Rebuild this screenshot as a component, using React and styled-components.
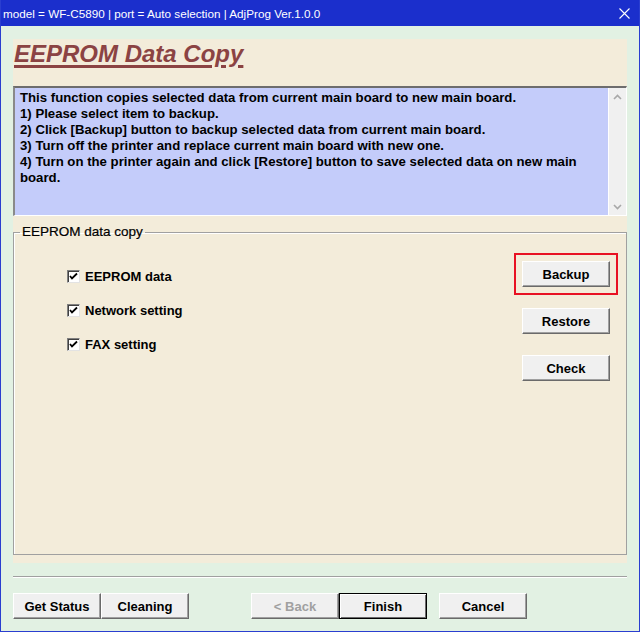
import styled, { createGlobalStyle } from "styled-components";

const GlobalStyle = createGlobalStyle`
    body {
        margin: 0;
        font-family: "Liberation Sans", Arial, sans-serif;
    }
`

const Window = styled.div`
    width: 640px;
    height: 632px;
    box-sizing: border-box;
    display: flex;
    flex-direction: column;
    background-color: #e2f1e3;
    border: 1px solid #2a3ed0;
    border-top: none;
    overflow: hidden;
`

const TitleBar = styled.div`
    height: 26px;
    flex: none;
    display: flex;
    align-items: center;
    justify-content: space-between;
    padding: 0 10px 0 3px;
    margin: 0 -1px;
    background-color: #1b2fcc;
    color: #fff;
    font-size: 11.7px;
    font-family: "Liberation Sans", Arial, sans-serif;
    >svg {
        display: block;
    }
`

const Body = styled.div`
    flex: 1;
    display: flex;
    flex-direction: column;
    padding: 13px 12px 0 12px;
`

const Panel = styled.div`
    height: 524px;
    display: flex;
    flex-direction: column;
    background-color: #f3ecda;
`

const Heading = styled.h1`
    margin: 0;
    padding: 1px 0 0 1px;
    height: 47px;
    box-sizing: border-box;
    font-size: 24px;
    line-height: 28px;
    font-weight: bold;
    font-style: italic;
    color: #8b4343;
    text-decoration: underline;
    text-decoration-thickness: 3px;
    text-underline-offset: 3px;
`

const TextBox = styled.div`
    height: 130px;
    box-sizing: border-box;
    display: flex;
    background-color: #c4ccfa;
    border-style: solid;
    border-width: 2px 1px 1px 2px;
    border-color: #6d6d6d #ffffff #ffffff #8a8a8a;
    >div.text {
        flex: 1;
        padding: 2px 5px;
        font-size: 13.2px;
        font-weight: bold;
        line-height: 16px;
        color: #000;
    }
`

const ScrollBar = styled.div`
    width: 17px;
    flex: none;
    display: flex;
    flex-direction: column;
    justify-content: space-between;
    align-items: center;
    padding: 6px 0 5px;
    background-color: #f0f0f0;
    border-left: 1px solid #fff;
`

const Group = styled.fieldset`
    margin: 8px 0 0 0;
    padding: 0 16px 0 6px;
    height: 331px;
    box-sizing: border-box;
    border: 1px solid #a0a0a0;
    box-shadow: inset 1px 1px 0 #fff;
    display: flex;
    justify-content: space-between;
    align-items: flex-start;
    >legend {
        padding: 0 2px;
        font-size: 13.5px;
        line-height: 16px;
        color: #000;
        -webkit-text-stroke: 0.2px #000;
    }
`

const CheckList = styled.div`
    margin: 26px 0 0 47px;
    display: flex;
    flex-direction: column;
    gap: 14px;
`

const CheckRow = styled.label`
    display: flex;
    align-items: center;
    gap: 5px;
    height: 20px;
    font-size: 13px;
    font-weight: bold;
    color: #000;
`

const Box = styled.span`
    width: 13px;
    height: 13px;
    box-sizing: border-box;
    display: flex;
    align-items: center;
    justify-content: center;
    background-color: #fff;
    border-style: solid;
    border-width: 1px;
    border-color: #808080 #e3e3e3 #e3e3e3 #808080;
    box-shadow: inset 1px 1px 0 #404040;
`

const ButtonColumn = styled.div`
    margin-top: 21px;
    display: flex;
    flex-direction: column;
    gap: 21px;
`

const Button = styled.button`
    width: 88px;
    height: 26px;
    box-sizing: border-box;
    padding: 0;
    background-color: #f0f0f0;
    font-family: "Liberation Sans", Arial, sans-serif;
    font-size: 13px;
    font-weight: bold;
    color: ${p => p.disabled ? "#a0a0a0" : "#000"};
    border: 1px solid;
    border-color: ${p => p.$default ? "#000" : "#fff #6a6a6a #6a6a6a #fff"};
    box-shadow: ${p => p.$default
        ? "inset 1px 1px 0 #fff, inset -1px -1px 0 #6a6a6a"
        : "inset -1px -1px 0 #a0a0a0"};
    outline: ${p => p.$focus ? "2px solid #e81123" : "none"};
    outline-offset: 6px;
`

const Separator = styled.div`
    margin-top: 13px;
    height: 1px;
    background-color: #a0a0a0;
    border-bottom: 1px solid #fff;
`

const Footer = styled.div`
    margin-top: 15px;
    display: flex;
    align-items: center;
    >div {
        display: flex;
    }
    >div.nav {
        margin-left: 62px;
    }
    >.cancel {
        margin-left: 12px;
    }
`

function Check() {
    return (
        <svg width="9" height="9" viewBox="0 0 9 9">
            <path d="M1 4 L3 6.5 L8 1.5" stroke="#000" strokeWidth="1.8" fill="none" />
        </svg>
    )
}

function Chevron({ up }) {
    return (
        <svg width="9" height="6" viewBox="0 0 9 6">
            <path d={up ? "M1 5 L4.5 1.5 L8 5" : "M1 1 L4.5 4.5 L8 1"} stroke="#a8a8a8" strokeWidth="1.6" fill="none" />
        </svg>
    )
}

const items = ["EEPROM data", "Network setting", "FAX setting"];

export default function App() {
    return (
        <>
            <GlobalStyle />
            <Window>
                <TitleBar>
                    <span>model = WF-C5890 | port = Auto selection | AdjProg Ver.1.0.0</span>
                    <svg width="11" height="11" viewBox="0 0 11 11">
                        <path d="M0.5 0.5 L10.5 10.5 M10.5 0.5 L0.5 10.5" stroke="#fff" strokeWidth="1.1" />
                    </svg>
                </TitleBar>
                <Body>
                    <Panel>
                        <Heading>EEPROM Data Copy</Heading>
                        <TextBox>
                            <div className="text">
                                This function copies selected data from current main board to new main board.<br />
                                1) Please select item to backup.<br />
                                2) Click [Backup] button to backup selected data from current main board.<br />
                                3) Turn off the printer and replace current main board with new one.<br />
                                4) Turn on the printer again and click [Restore] button to save selected data on new main board.
                            </div>
                            <ScrollBar>
                                <Chevron up />
                                <Chevron />
                            </ScrollBar>
                        </TextBox>
                        <Group>
                            <legend>EEPROM data copy</legend>
                            <CheckList>
                                {items.map(item => (
                                    <CheckRow key={item}>
                                        <Box><Check /></Box>
                                        {item}
                                    </CheckRow>
                                ))}
                            </CheckList>
                            <ButtonColumn>
                                <Button $focus>Backup</Button>
                                <Button>Restore</Button>
                                <Button>Check</Button>
                            </ButtonColumn>
                        </Group>
                    </Panel>
                    <Separator />
                    <Footer>
                        <div>
                            <Button>Get Status</Button>
                            <Button>Cleaning</Button>
                        </div>
                        <div className="nav">
                            <Button disabled>&lt; Back</Button>
                            <Button $default>Finish</Button>
                        </div>
                        <Button className="cancel">Cancel</Button>
                    </Footer>
                </Body>
            </Window>
        </>
    )
}
